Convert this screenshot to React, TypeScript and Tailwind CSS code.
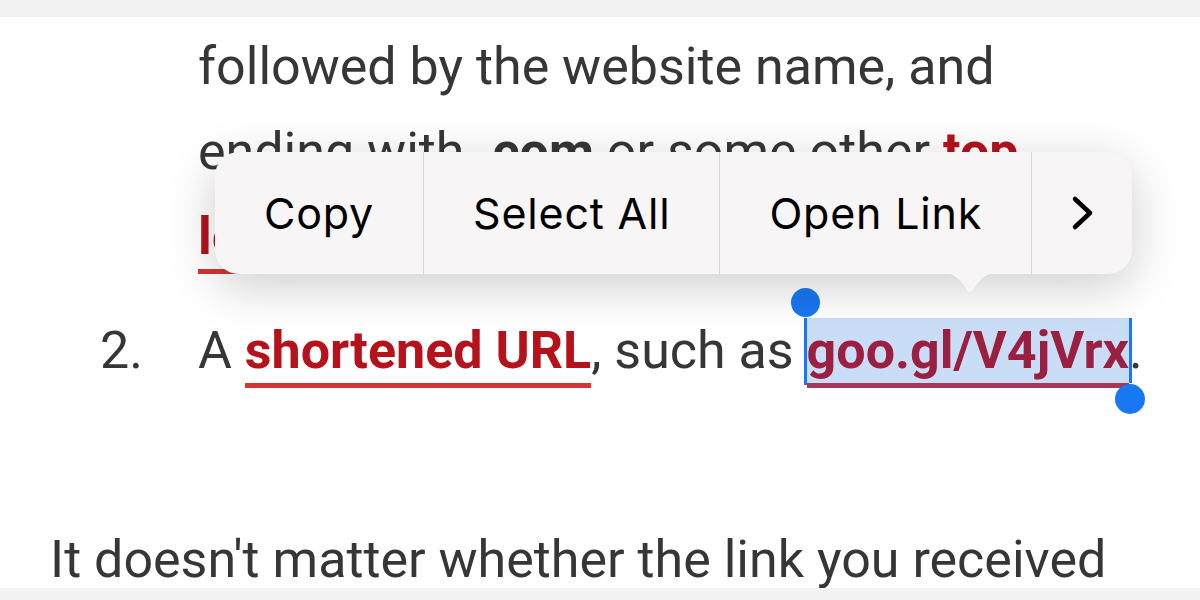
import React from "react";

const body = { fontFamily: "Roboto, 'Noto Sans', sans-serif" };
const menuFont = { fontFamily: "Inter, 'Liberation Sans', sans-serif" };

function Handle({ side }: { side: "start" | "end" }) {
  if (side === "start") {
    return (
      <span className="absolute left-[-3px] top-0 bottom-[-2px] w-[3px] bg-[#1877f2]">
        <span className="absolute left-[-13px] top-[-30px] w-[29px] h-[29px] rounded-full bg-[#1877f2]" />
      </span>
    );
  }
  return (
    <span className="absolute right-[-3px] top-0 bottom-0 w-[3px] bg-[#1877f2]">
      <span className="absolute left-[-14px] bottom-[-31px] w-[30px] h-[30px] rounded-full bg-[#1877f2]" />
    </span>
  );
}

function ContextMenu() {
  const items = ["Copy", "Select All", "Open Link"];
  return (
    <div className="absolute left-[215px] top-[152px]" style={menuFont}>
      <div className="flex h-[122px] rounded-[24px] bg-[#f7f5f5] shadow-[0_12px_50px_rgba(0,0,0,0.2)] overflow-hidden">
        {items.map((label) => (
          <div
            key={label}
            className="flex items-center px-[49px] border-r border-[#d9d7d7] text-[43px] text-black tracking-[0.8px]"
          >
            {label}
          </div>
        ))}
        <div className="flex items-center justify-center w-[100px]">
          <svg width="26" height="38" viewBox="0 0 26 38" fill="none">
            <polyline
              points="6,5 21,19 6,33"
              stroke="#000"
              strokeWidth="4.5"
              strokeLinecap="round"
              strokeLinejoin="round"
            />
          </svg>
        </div>
      </div>
      <svg
        className="absolute left-[728px] top-[121px]"
        width="54"
        height="24"
        viewBox="0 0 54 24"
      >
        <path d="M0 0 H54 C44 0 40 4 34 11 L30 17 C28 20 26 20 24 17 L20 11 C14 4 10 0 0 0 Z" fill="#f7f5f5" />
      </svg>
    </div>
  );
}

export default function App() {
  return (
    <div className="relative flex flex-col h-[600px] w-[1200px] overflow-hidden bg-white text-[52px] leading-[85px] text-[#363636]" style={body}>
      <div className="h-[17px] shrink-0 bg-[#f2f2f2]" />
      <div className="flex-1 overflow-hidden pt-[7px]">
        <div className="flex">
          <div className="w-[198px] shrink-0" />
          <p className="whitespace-nowrap">
            followed by the website name, and
            <br />
            ending with <b className="font-bold">.com</b> or some other{" "}
            <span className="font-bold text-[#b5121b] border-b-[5px] border-[#d33535] pb-[2px]">top</span>
            <br />
            <span className="font-bold text-[#b5121b] border-b-[5px] border-[#d33535] pb-[2px]">level domain</span>.
          </p>
        </div>
        <div className="flex mt-[29px]">
          <div className="w-[198px] shrink-0 pl-[100px]">2.</div>
          <p className="whitespace-nowrap">
            A{" "}
            <span className="font-bold text-[#b5121b] border-b-[5px] border-[#d33535] pb-[2px]">shortened URL</span>
            , such as{" "}
            <span className="relative font-bold text-[#9b1f40] bg-[#c9ddf6] pt-[2px] pb-[2px] border-b-[5px] border-[#a83658]">
              goo.gl/V4jVrx
              <Handle side="start" />
              <Handle side="end" />
            </span>
            .
          </p>
        </div>
        <p className="mt-[124px] pl-[50px] whitespace-nowrap">
          It doesn't matter whether the link you received
        </p>
      </div>
      <div className="h-[12px] shrink-0 bg-[#f2f2f2]" />
      <ContextMenu />
    </div>
  );
}
